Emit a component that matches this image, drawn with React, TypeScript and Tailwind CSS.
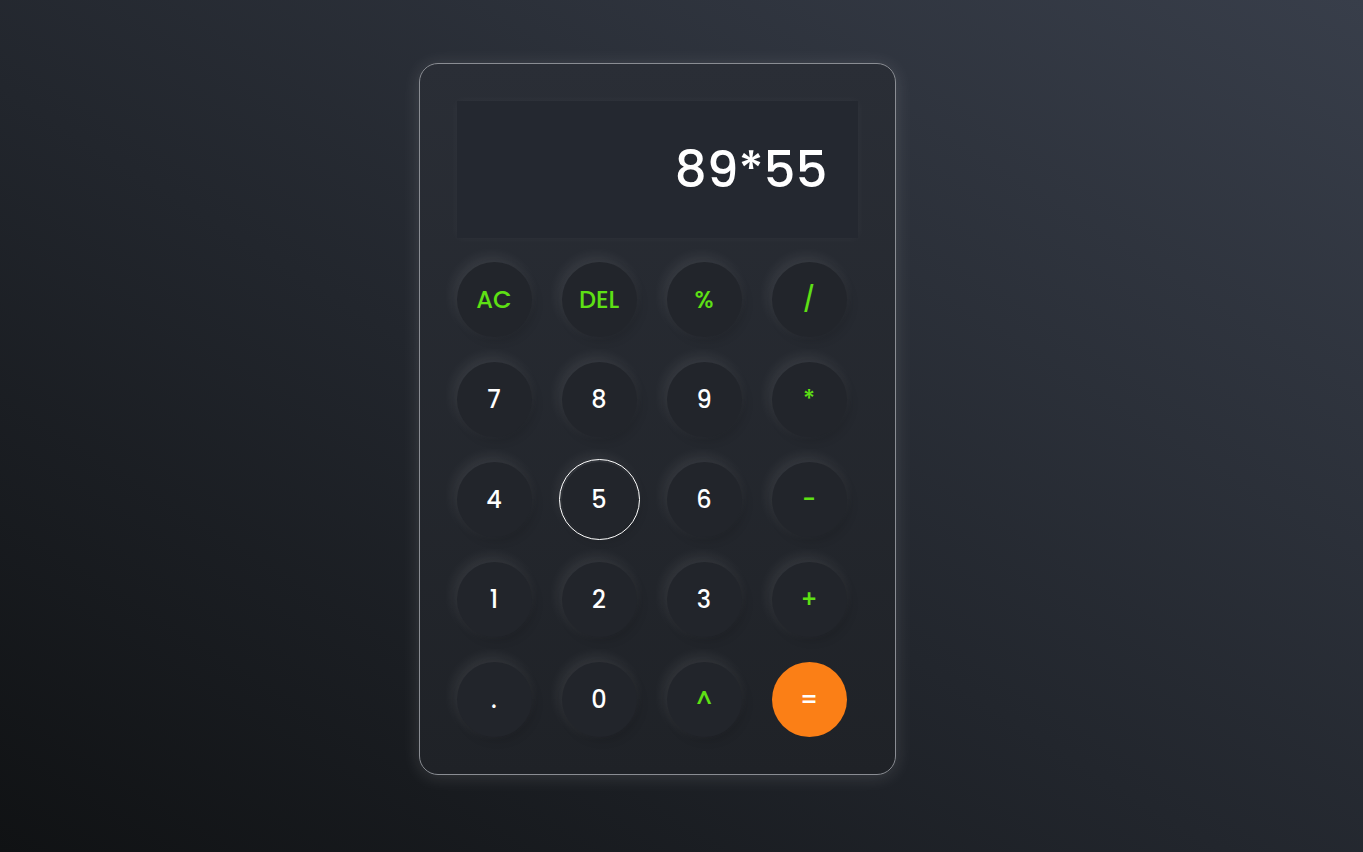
import React from "react";

type Key = { label: string; kind: "num" | "op" | "eq"; active?: boolean };

const keys: Key[] = [
  { label: "AC", kind: "op" },
  { label: "DEL", kind: "op" },
  { label: "%", kind: "op" },
  { label: "/", kind: "op" },
  { label: "7", kind: "num" },
  { label: "8", kind: "num" },
  { label: "9", kind: "num" },
  { label: "*", kind: "op" },
  { label: "4", kind: "num" },
  { label: "5", kind: "num", active: true },
  { label: "6", kind: "num" },
  { label: "-", kind: "op" },
  { label: "1", kind: "num" },
  { label: "2", kind: "num" },
  { label: "3", kind: "num" },
  { label: "+", kind: "op" },
  { label: ".", kind: "num" },
  { label: "0", kind: "num" },
  { label: "^", kind: "op" },
  { label: "=", kind: "eq" },
];

function CalcKey({ k }: { k: Key }) {
  const base =
    "w-[75px] h-[75px] rounded-full flex items-center justify-center text-[24px] font-medium leading-none select-none";
  if (k.kind === "eq") {
    return <div className={`${base} bg-[#fb7f16] text-white`}>{k.label}</div>;
  }
  const color = k.kind === "op" ? "text-[#5ee014]" : "text-white";
  const ring = k.active
    ? "outline outline-[1.5px] outline-offset-[2px] outline-white"
    : "";
  return (
    <div
      className={`${base} ${color} ${ring} bg-[#22252b] shadow-[-3px_-5px_14px_rgba(255,255,255,0.09),3px_4px_10px_rgba(0,0,0,0.12)]`}
    >
      {k.label}
    </div>
  );
}

export default function App() {
  return (
    <div
      className="min-h-[852px] w-full bg-[linear-gradient(to_top_right,#101214_0%,#22262d_45%,#383e4a_100%)] flex justify-center pt-[63px] pr-[49px]"
      style={{ fontFamily: "Poppins, Inter, 'Noto Sans', sans-serif" }}
    >
      <div className="w-[477px] h-[712px] rounded-[19px] border border-[#8a8d93] bg-[linear-gradient(to_bottom,#2a2e36,#1f2227)] shadow-[0_2px_18px_rgba(255,255,255,0.13)] px-[37px] pt-[37px] flex flex-col">
        <div className="w-[401px] h-[137px] bg-[#242830] shadow-[0_0_10px_rgba(255,255,255,0.04)] flex items-center justify-end pr-[30px]">
          <span className="text-white text-[50px] font-medium leading-none">
            89*55
          </span>
        </div>
        <div className="mt-[24px] grid grid-cols-[repeat(4,75px)] gap-x-[30px] gap-y-[25px]">
          {keys.map((k) => (
            <CalcKey key={k.label} k={k} />
          ))}
        </div>
      </div>
    </div>
  );
}
